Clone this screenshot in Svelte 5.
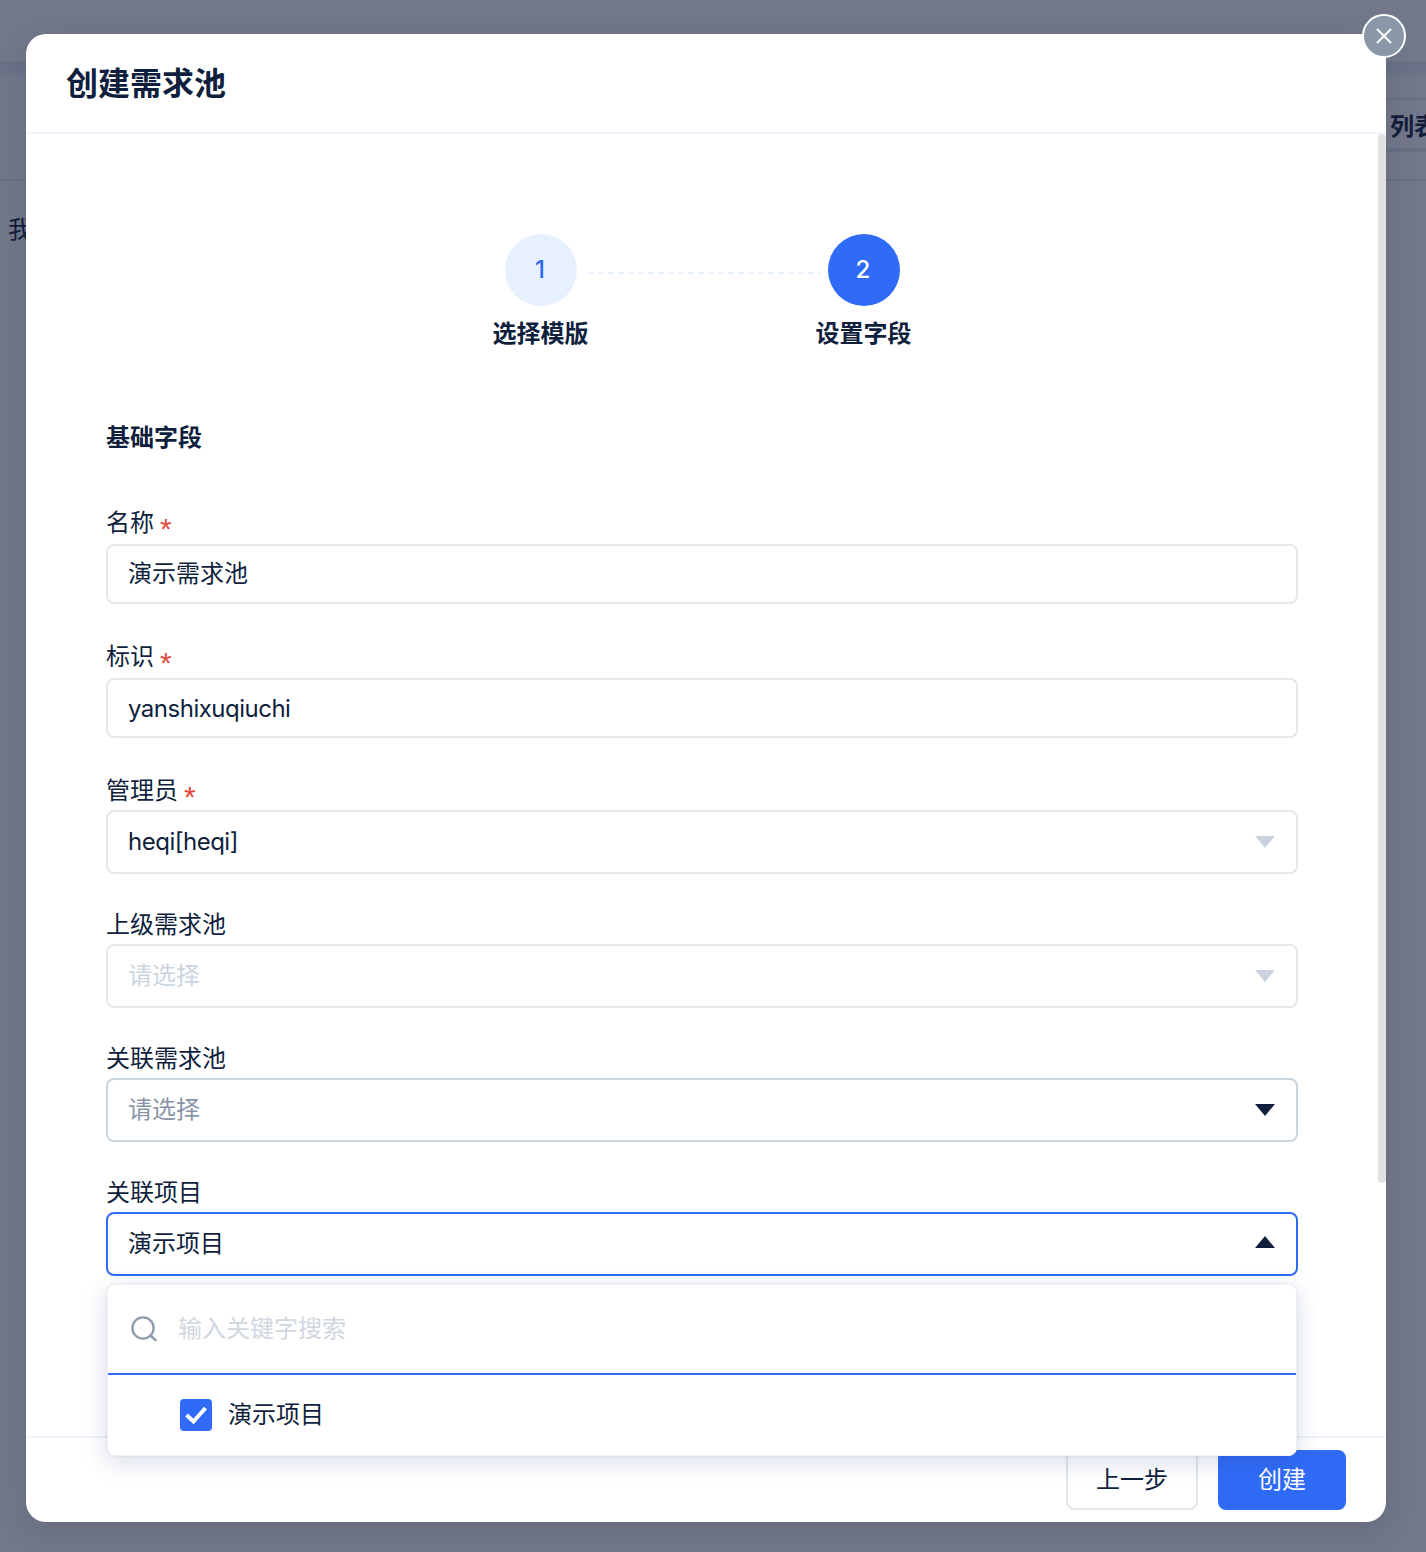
<script>
  const fields = [
    { label: '名称', required: true, type: 'input', value: '演示需求池' },
    { label: '标识', required: true, type: 'input', value: 'yanshixuqiuchi', latin: true },
    { label: '管理员', required: true, type: 'select', value: 'heqi[heqi]', latin: true, state: 'muted' },
    { label: '上级需求池', type: 'select', placeholder: '请选择', state: 'disabled' },
    { label: '关联需求池', type: 'select', placeholder: '请选择', state: 'normal' },
    { label: '关联项目', type: 'select', value: '演示项目', state: 'open' }
  ];
</script>

<div class="page">
  <div class="top"></div>
  <div class="band"></div>
  <div class="toolbar">
    <div class="tab">列表</div>
  </div>
  <div class="crumb">我</div>
</div>

<div class="overlay">
  <div class="modal">
    <button class="close" aria-label="关闭">
      <svg width="16" height="16" viewBox="0 0 16 16" fill="none" stroke="#fff" stroke-width="2" stroke-linecap="round">
        <path d="M1.5 1.5l13 13M14.5 1.5l-13 13"></path>
      </svg>
    </button>

    <div class="header">创建需求池</div>

    <div class="body">
      <div class="scrollbar"></div>

      <div class="steps">
        <div class="step">
          <div class="circle done">1</div>
          <div class="step-name">选择模版</div>
        </div>
        <div class="connector"></div>
        <div class="step">
          <div class="circle active">2</div>
          <div class="step-name">设置字段</div>
        </div>
      </div>

      <div class="section-title">基础字段</div>

      {#each fields as field}
        <div class="field">
          <div class="label">
            {field.label}
            {#if field.required}<span class="star">*</span>{/if}
          </div>
          <div class="control">
            {#if field.type === 'input'}
              <input class="input" class:latin={field.latin} value={field.value} />
            {:else}
              <div class="select {field.state}" class:latin={field.latin}>
                {#if field.value}
                  <span>{field.value}</span>
                {:else}
                  <span class="placeholder">{field.placeholder}</span>
                {/if}
                <i class="arrow"></i>
              </div>
            {/if}
            {#if field.state === 'open'}
              <div class="dropdown">
                <div class="search">
                  <svg width="28" height="28" viewBox="0 0 28 28" fill="none" stroke="#8f9bb0" stroke-width="2.4" stroke-linecap="round">
                    <circle cx="13" cy="13" r="10.6"></circle>
                    <path d="M21 21l4.6 4.2"></path>
                  </svg>
                  <span>输入关键字搜索</span>
                </div>
                <div class="option">
                  <span class="checkbox">
                    <svg width="24" height="20" viewBox="0 0 24 20" fill="none" stroke="#fff" stroke-width="4">
                      <path d="M2.5 10l7 6.5L21.5 3"></path>
                    </svg>
                  </span>
                  演示项目
                </div>
              </div>
            {/if}
          </div>
        </div>
      {/each}
    </div>

    <div class="footer">
      <button class="btn">上一步</button>
      <button class="btn primary">创建</button>
    </div>
  </div>
</div>

<style>
  :global(body) {
    margin: 0;
    background: #fff;
    font-family: Inter, "Noto Sans CJK SC", sans-serif;
    color: #0f1f3d;
  }

  .page {
    height: 1552px;
    overflow: hidden;
    box-sizing: border-box;
  }

  .top {
    height: 62px;
  }

  .band {
    height: 13px;
    background: #ecf3f7;
    border-top: 1px solid #dfe6ee;
    box-sizing: border-box;
  }

  .toolbar {
    height: 104px;
    display: flex;
    justify-content: flex-end;
    align-items: flex-start;
    border-bottom: 2px solid #e6ebf1;
  }

  .tab {
    margin-top: 23px;
    height: 54px;
    width: 40px;
    box-sizing: border-box;
    border-top: 2px solid #e6ebf1;
    border-bottom: 4px solid #e6ebf1;
    font-size: 24px;
    font-weight: 700;
    line-height: 54px;
    white-space: nowrap;
    overflow: hidden;
    text-indent: 4px;
  }

  .crumb {
    margin: 33px 0 0 8px;
    font-size: 24px;
    line-height: 32px;
    color: #0f1f3d;
  }

  .overlay {
    position: absolute;
    inset: 0;
    width: 1426px;
    height: 1552px;
    background: rgba(20, 28, 60, 0.6);
    overflow: hidden;
  }

  .modal {
    position: absolute;
    left: 26px;
    top: 34px;
    width: 1360px;
    height: 1488px;
    background: #fff;
    border-radius: 20px;
    display: flex;
    flex-direction: column;
    box-shadow: 0 8px 30px rgba(20, 28, 60, 0.12);
  }

  .close {
    position: absolute;
    right: -20px;
    top: -20px;
    width: 44px;
    height: 44px;
    box-sizing: border-box;
    padding: 0;
    border: 2px solid #fff;
    border-radius: 50%;
    background: #8a97a9;
    display: flex;
    align-items: center;
    justify-content: center;
    z-index: 3;
  }

  .header {
    height: 100px;
    box-sizing: border-box;
    padding: 0 40px;
    border-bottom: 2px solid #eff3fb;
    font-size: 32px;
    font-weight: 700;
    line-height: 100px;
    flex: none;
  }

  .body {
    position: relative;
    flex: 1;
    padding: 100px 88px 0 80px;
    z-index: 2;
  }

  .scrollbar {
    position: absolute;
    right: 0;
    top: 0;
    width: 8px;
    height: 1049px;
    background: #e2e2e2;
    border-radius: 4px;
  }

  .steps {
    display: flex;
    justify-content: center;
  }

  .step {
    width: 96px;
    display: flex;
    flex-direction: column;
    align-items: center;
  }

  .circle {
    width: 72px;
    height: 72px;
    box-sizing: border-box;
    padding: 0 1px 2px 0;
    border-radius: 50%;
    display: flex;
    align-items: center;
    justify-content: center;
    font-size: 24px;
    font-weight: 500;
  }

  .circle.done {
    background: #e6f0ff;
    color: #306bf8;
  }

  .circle.active {
    background: #306bf8;
    color: #fff;
  }

  .step-name {
    margin-top: 12px;
    font-size: 24px;
    font-weight: 700;
    line-height: 32px;
    white-space: nowrap;
  }

  .connector {
    width: 232px;
    height: 2px;
    margin: 38px -4px 0 -1px;
    background: repeating-linear-gradient(90deg, #e6f0ff 0 6px, transparent 6px 10px);
  }

  .section-title {
    margin: 72px 0 52px;
    font-size: 24px;
    font-weight: 700;
    line-height: 32px;
  }

  .field {
    margin-bottom: 34px;
  }

  .label {
    height: 32px;
    font-size: 24px;
    line-height: 33px;
    margin-bottom: 4px;
    display: flex;
    gap: 6px;
  }

  .star {
    margin-top: 7px;
    color: #e5483d;
    font-family: "Liberation Sans", sans-serif;
    font-size: 30px;
    line-height: 32px;
  }

  .control {
    position: relative;
    height: 64px;
    display: flex;
    align-items: center;
  }

  .input {
    width: 100%;
    height: 60px;
    box-sizing: border-box;
    padding: 0 20px 6px;
    border: 2px solid #e2e8ee;
    border-radius: 8px;
    font: inherit;
    font-size: 24px;
    line-height: 32px;
    color: inherit;
    outline: none;
  }

  .input.latin {
    padding-bottom: 0;
  }

  .select {
    width: 100%;
    height: 64px;
    box-sizing: border-box;
    padding: 0 21px 0 20px;
    border: 2px solid #e2e8ee;
    border-radius: 8px;
    font-size: 24px;
    line-height: 32px;
    display: flex;
    align-items: center;
    justify-content: space-between;
  }

  .latin {
    letter-spacing: -0.5px;
  }

  .placeholder {
    color: #8794a8;
  }

  .arrow {
    width: 0;
    height: 0;
    border-left: 10px solid transparent;
    border-right: 10px solid transparent;
    border-top: 12px solid #c9d2de;
  }

  .select.disabled .placeholder {
    color: #cbd5e0;
  }

  .select.normal {
    border-color: #cbd5e0;
  }

  .select.normal .arrow {
    border-top-color: #0f1f3d;
  }

  .select.open {
    border-color: #306bf8;
  }

  .select.open .arrow {
    border-top: 0;
    border-bottom: 12px solid #0f1f3d;
    margin-bottom: 4px;
  }

  .dropdown {
    position: absolute;
    left: 1px;
    right: 1px;
    top: 72px;
    background: #fff;
    border: 1px solid #eef1f6;
    border-radius: 8px;
    box-shadow: 0 0 3px rgba(40, 60, 120, 0.1), 0 6px 24px rgba(40, 60, 120, 0.18);
  }

  .search {
    height: 90px;
    box-sizing: border-box;
    border-bottom: 2px solid #306bf8;
    padding: 0 22px;
    display: flex;
    align-items: center;
    gap: 20px;
    font-size: 24px;
    line-height: 32px;
    color: #d0d7e0;
  }

  .option {
    height: 80px;
    padding-left: 72px;
    display: flex;
    align-items: center;
    gap: 16px;
    font-size: 24px;
    line-height: 32px;
  }

  .checkbox {
    width: 32px;
    height: 32px;
    border-radius: 4px;
    background: #306bf8;
    display: flex;
    align-items: center;
    justify-content: center;
  }

  .footer {
    height: 86px;
    margin-top: -1px;
    box-sizing: border-box;
    flex: none;
    padding: 12px 40px 0 0;
    border-top: 2px solid #eff3fb;
    display: flex;
    justify-content: flex-end;
    align-items: flex-start;
    gap: 20px;
  }

  .btn {
    width: 132px;
    height: 60px;
    padding: 0;
    border: 2px solid #e2e8ee;
    border-radius: 8px;
    background: #fff;
    color: inherit;
    font: inherit;
    font-size: 24px;
    line-height: 32px;
  }

  .btn.primary {
    width: 128px;
    border-color: #306bf8;
    background: #306bf8;
    color: #fff;
  }
</style>
